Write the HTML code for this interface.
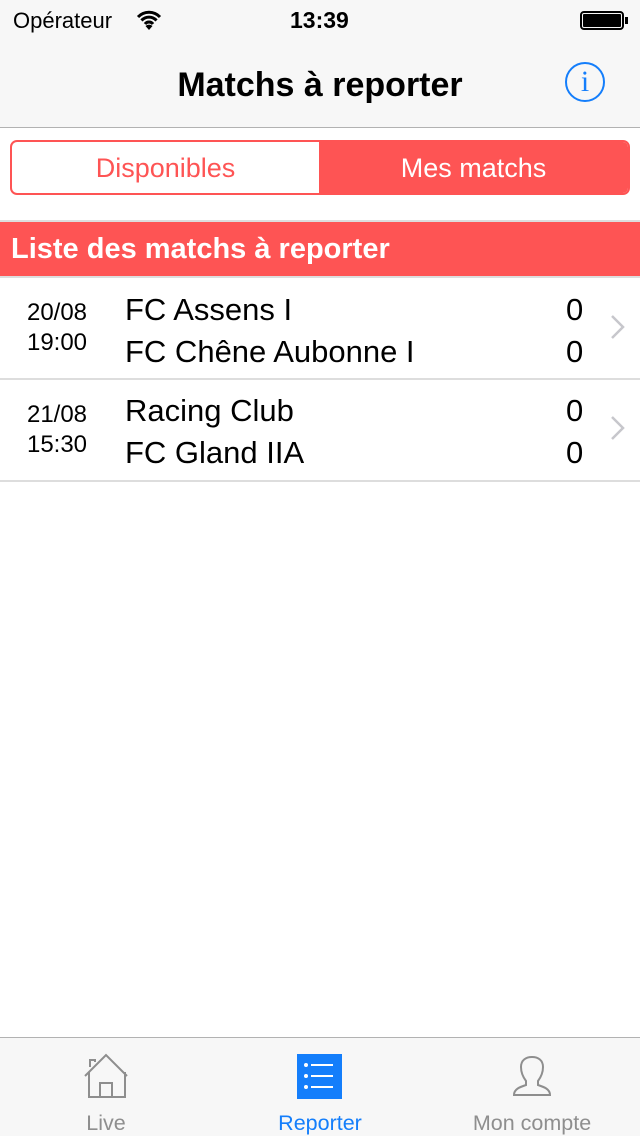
<!DOCTYPE html>
<html><head><meta charset="utf-8"><style>
*{margin:0;padding:0;box-sizing:border-box}
body{width:640px;height:1136px;background:#fff;font-family:"Liberation Sans",sans-serif;position:relative;overflow:hidden}
.a{position:absolute;white-space:nowrap}
</style></head><body>
<div class="a" style="left:0;top:0;width:640px;height:128px;background:#f7f7f7;border-bottom:1px solid #b2b2b2"></div>
<div class="a" style="left:13px;top:8px;font-size:22px">Opérateur</div>
<svg class="a" style="left:136px;top:9px" width="26" height="22" viewBox="0 0 26 22"><path d="M2 8a15 15 0 0 1 22 0M5.5 11.5a10 10 0 0 1 15 0M9 15a5 5 0 0 1 8 0" stroke="#000" stroke-width="3" fill="none"/><path d="M13 21l-3.5-4a5 5 0 0 1 7 0z"/></svg>
<div class="a" style="left:290px;top:7px;font-size:23px;font-weight:bold">13:39</div>
<div class="a" style="left:580px;top:11px;width:44px;height:19px;border:2px solid #000;border-radius:4px;padding:1px"><div style="background:#000;width:100%;height:100%;border-radius:1px"></div></div>
<div class="a" style="left:625px;top:17px;width:3px;height:7px;background:#000"></div>
<div class="a" style="left:0;width:640px;top:66px;text-align:center;font-size:34px;font-weight:bold">Matchs à reporter</div>
<div class="a" style="left:565px;top:62px;width:40px;height:40px;border:2px solid #147efb;border-radius:50%;color:#147efb;font-family:'Liberation Serif',serif;font-size:30px;text-align:center;line-height:36px">i</div>
<div class="a" style="left:10px;top:140px;width:620px;height:55px;border:2px solid #fe5454;border-radius:7px;overflow:hidden">
<div class="a" style="left:307px;top:0;width:313px;height:55px;background:#fe5454"></div>
<div class="a" style="left:0;width:307px;top:11px;text-align:center;font-size:27px;color:#fe5454">Disponibles</div>
<div class="a" style="left:307px;width:309px;top:11px;text-align:center;font-size:27px;color:#fff">Mes matchs</div>
</div>
<div class="a" style="left:0;top:220px;width:640px;height:2px;background:#ddd"></div>
<div class="a" style="left:0;top:222px;width:640px;height:54px;background:#fe5454"></div>
<div class="a" style="left:11px;top:233px;font-size:29px;font-weight:bold;color:#fff">Liste des matchs à reporter</div>
<div class="a" style="left:0;top:276px;width:640px;height:2px;background:#ddd"></div>

<div class="a" style="left:0;top:298px;width:114px;text-align:center;font-size:24px;line-height:30px">20/08<br>19:00</div>
<div class="a" style="left:125px;top:289px;font-size:31px;line-height:42px">FC Assens I<br>FC Chêne Aubonne I</div>
<div class="a" style="left:566px;top:289px;font-size:31px;line-height:42px">0<br>0</div>
<svg class="a" style="left:609px;top:314px" width="18" height="26"><path d="M3 2l11 11-11 11" stroke="#c7c7cc" stroke-width="2.5" fill="none"/></svg>
<div class="a" style="left:0;top:378px;width:640px;height:2px;background:#ddd"></div>

<div class="a" style="left:0;top:400px;width:114px;text-align:center;font-size:24px;line-height:30px">21/08<br>15:30</div>
<div class="a" style="left:125px;top:390px;font-size:31px;line-height:42px">Racing Club<br>FC Gland IIA</div>
<div class="a" style="left:566px;top:390px;font-size:31px;line-height:42px">0<br>0</div>
<svg class="a" style="left:609px;top:415px" width="18" height="26"><path d="M3 2l11 11-11 11" stroke="#c7c7cc" stroke-width="2.5" fill="none"/></svg>
<div class="a" style="left:0;top:480px;width:640px;height:2px;background:#ddd"></div>

<div class="a" style="left:0;top:1037px;width:640px;height:99px;background:#f7f7f7;border-top:1px solid #b2b2b2"></div>
<svg class="a" style="left:82px;top:1053px" width="46" height="46" viewBox="0 0 46 46"><path d="M3 23L24 2l21 21M7 19v25h36V19M18 44V30h12v14M8 14V7h5v2" stroke="#8e8e8e" stroke-width="2" fill="none"/></svg>
<div class="a" style="left:297px;top:1054px;width:45px;height:45px;background:#147efb"></div>
<svg class="a" style="left:297px;top:1054px" width="45" height="45"><g fill="#fff"><circle cx="9" cy="11" r="2"/><circle cx="9" cy="22" r="2"/><circle cx="9" cy="33" r="2"/><rect x="14" y="10" width="22" height="2"/><rect x="14" y="21" width="22" height="2"/><rect x="14" y="32" width="22" height="2"/></g></svg>
<svg class="a" style="left:512px;top:1055px" width="40" height="44" viewBox="0 0 40 44"><path d="M14 26c-3-4-5-8-5-14C9 5 14 2 20 2s11 3 11 10c0 6-2 10-5 14v4c6 2 12 4 12 10H2c0-6 6-8 12-10z" stroke="#8e8e8e" stroke-width="2" fill="none"/></svg>
<div class="a" style="left:0;width:212px;top:1111px;text-align:center;font-size:21.5px;color:#8e8e8e">Live</div>
<div class="a" style="left:214px;width:212px;top:1111px;text-align:center;font-size:21.5px;color:#147efb">Reporter</div>
<div class="a" style="left:426px;width:212px;top:1111px;text-align:center;font-size:21.5px;color:#8e8e8e">Mon compte</div>
</body></html>
